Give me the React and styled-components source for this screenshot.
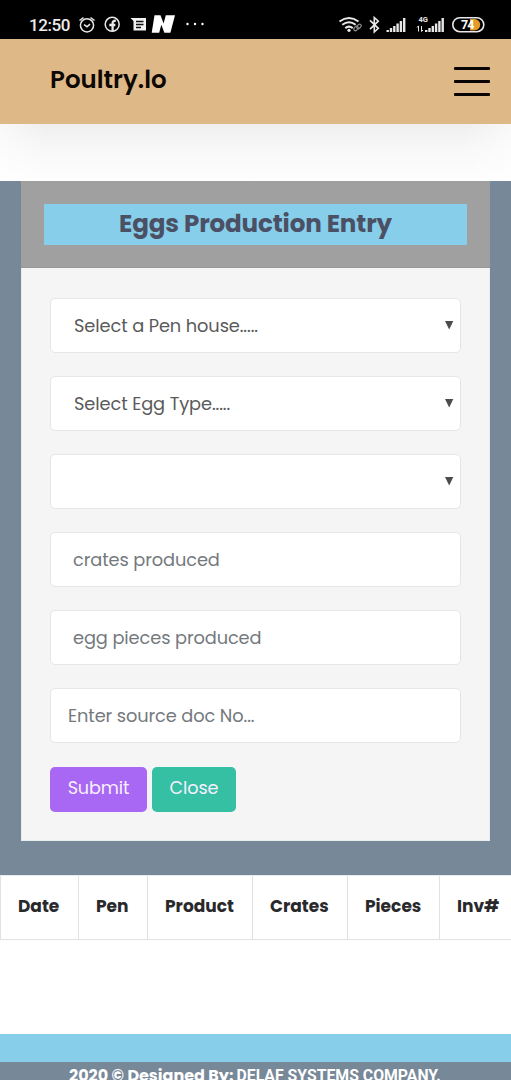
import React from 'react';
import styled, { createGlobalStyle } from 'styled-components';

const GlobalStyle = createGlobalStyle`
  *, *::before, *::after { box-sizing: border-box; }
  body { margin: 0; background: #fff; font-family: Poppins, Inter, "Open Sans", sans-serif; }
`;

const Page = styled.div`
  display: flex;
  flex-direction: column;
  width: 511px;
  height: 1080px;
  overflow: hidden;
  background: #fff;
`;

const Label = styled.span`
  letter-spacing: ${(p) => p.$track || 0}px;
  white-space: pre;
`;

const StatusBar = styled.div`
  display: flex;
  flex: none;
  justify-content: space-between;
  height: 39px;
  padding: 9px 26px 0 29px;
  background: #000;
  color: #ececec;
`;

const StatusGroup = styled.div`
  display: flex;
  height: 31px;
`;

const Clock = styled.span`
  width: 48px;
  font: 500 17px/32px Roboto, sans-serif;
  letter-spacing: -0.4px;
`;

const TopBar = styled.header`
  display: flex;
  flex: none;
  justify-content: space-between;
  height: 85px;
  padding: 0 21px 0 50px;
  background: #deb887;
`;

const Brand = styled.div`
  padding-top: 22px;
  color: #0d0804;
  font-size: 24.5px;
  font-weight: 600;
  line-height: 37px;
`;

const MenuButton = styled.button`
  display: flex;
  flex-direction: column;
  gap: 10px;
  width: 36px;
  margin-top: 28px;
  padding: 0;
  border: 0;
  background: none;
`;

const MenuLine = styled.span`
  height: 3px;
  border-radius: 1px;
  background: #080402;
`;

const Shade = styled.div`
  flex: none;
  height: 57px;
  background:
    linear-gradient(90deg, rgba(255, 255, 255, 0.6), rgba(255, 255, 255, 0) 9%, rgba(255, 255, 255, 0) 91%, rgba(255, 255, 255, 0.6)),
    linear-gradient(180deg, #efefef, #f8f8f8 45%, #fefefe);
`;

const Main = styled.main`
  flex: none;
  height: 694px;
  padding: 0 21px;
  background: #778899;
`;

const Card = styled.section`
  height: 660px;
  border: 1px solid #e9edf0;
  border-top: 0;
  background: #f5f5f5;
`;

const CardHeader = styled.div`
  height: 87px;
  margin: 0 -1px;
  padding: 23px 23px 0;
  background: #a0a0a0;
  border-bottom: 1px solid #969696;
`;

const Title = styled.h1`
  height: 41px;
  margin: 0;
  background: #87ceeb;
  color: #4b5064;
  font-size: 24.6px;
  font-weight: 700;
  line-height: 39px;
  text-align: center;
`;

const Form = styled.div`
  display: flex;
  flex-direction: column;
  gap: 23.2px;
  padding: 29.5px 28px 0;
`;

const Field = styled.div`
  display: flex;
  align-items: center;
  justify-content: space-between;
  height: 55px;
  padding: 0 6px 0 ${(p) => p.$inset}px;
  border: 1px solid #e6e6e6;
  border-radius: 5px;
  background: #fff;
  color: ${(p) => (p.$placeholder ? '#74797e' : '#5a5a5a')};
  font-size: 17.8px;
`;

const Actions = styled.div`
  display: flex;
  gap: 5px;
`;

const Button = styled.button`
  width: ${(p) => p.$width}px;
  height: 45px;
  padding: 0 0 2px;
  border: 0;
  border-radius: 5px;
  background: ${(p) => p.$color};
  color: #f8f0ff;
  font: 400 17.6px Poppins, Inter, sans-serif;
`;

const Table = styled.div`
  display: grid;
  flex: none;
  grid-template-columns: 78px 69px 105px 95px 92px 72px;
  height: 65px;
  border-bottom: 1px solid #e2e2e2;
  border-top: 1px solid #e8ebee;
`;

const HeadCell = styled.div`
  padding-left: 17px;
  border-left: 1px solid #e2e2e2;
  color: #29292c;
  font-size: 17px;
  font-weight: 700;
  line-height: 61px;
`;

const SkyBand = styled.div`
  flex: none;
  height: 28px;
  margin-top: 94px;
  background: #87ceeb;
`;

const Footer = styled.footer`
  display: flex;
  flex: none;
  height: 18px;
  padding: 1px 0 0 69px;
  overflow: hidden;
  background: #778899;
  color: #fff;
  font-size: 16px;
  font-weight: 700;
  line-height: 25px;
`;

const Company = styled.span`
  margin-left: 3px;
  font-family: Roboto, sans-serif;
  font-size: 15.8px;
  font-weight: 700;
  white-space: nowrap;
`;

const LeftIcons = () => (
  <svg width="130" height="30" viewBox="77 9 130 30" fill="none" stroke="#e8e8e8">
    <g strokeWidth="1.5">
      <circle cx="87" cy="25.3" r="6.6" />
      <path d="M79.5 20.5l4-3M94.5 20.5l-4-3M84 24.7l3 2 3-2.6" />
      <circle cx="112.2" cy="24.3" r="7" />
    </g>
    <path d="M112.6 31.5v-8.2c0-1.9.8-2.7 3.2-2.5M109.3 25h6" strokeWidth="2.3" />
    <path d="M130.5 18H146v12.5h-12.5V21z" fill="#f2f2f2" stroke="none" />
    <path d="M136 21.5h7.5M136 24.5h7.5M136 27.5h5" stroke="#111" strokeWidth="1.3" />
    <path d="M154.5 15.3h6l3.1 8.2 2.2-8.2H175l-4.6 17.5h-6l-3.1-8-2.1 8h-7.5z" fill="#fff" stroke="none" />
    <g fill="#fff" stroke="none">
      <circle cx="187.5" cy="24" r="1.2" />
      <circle cx="195" cy="24" r="1.2" />
      <circle cx="202.5" cy="24" r="1.2" />
    </g>
  </svg>
);

const bars = [2, 4, 6, 8.5, 11, 14];

const RightIcons = () => (
  <svg width="147" height="30" viewBox="338 9 147 30" fill="none" stroke="#e8e8e8">
    <g strokeWidth="2">
      <path d="M339.5 21.5q9.5-7 19 0M342.3 24.8q6.7-5.2 13.4 0M345.3 28.1q3.7-3 7.4 0" />
    </g>
    <circle cx="349" cy="30.3" r="1.6" fill="#eee" stroke="none" />
    <g stroke="#888" strokeWidth="1.3">
      <rect x="353.5" y="26.8" width="5" height="3.2" rx="1.6" transform="rotate(-45 356 28.4)" />
      <rect x="356.5" y="24.8" width="5" height="3.2" rx="1.6" transform="rotate(-45 359 26.4)" />
    </g>
    <path d="M370 20.3l8.3 8-4 3.7V17.5l4 3.7-8.3 8" strokeWidth="1.6" />
    <g fill="#e8e8e8" stroke="none">
      {bars.map((h, i) => (
        <rect key={i} x={386.5 + i * 3.3} y={32 - h} width="2.4" height={h} />
      ))}
      {bars.map((h, i) => (
        <rect key={i} x={425 + i * 3.3} y={32 - h} width="2.4" height={h} />
      ))}
      <text x="418.5" y="21.5" fontFamily="Roboto, sans-serif" fontSize="7.5" fontWeight="700">4G</text>
    </g>
    <path d="M418.5 26v5.5M417 27.5l1.5-1.7M421.5 26v5.5M421.5 31.5l1.5-1.5" strokeWidth="1" />
    <path d="M470 19h4.5a5.7 5.7 0 0 1 0 11.4H470z" fill="#e49a2a" stroke="none" />
    <rect x="452.8" y="17.7" width="31" height="14" rx="7" strokeWidth="1.6" />
    <text x="461" y="29.2" fill="#fff" stroke="none" fontFamily="Roboto, sans-serif" fontSize="12.5" fontWeight="700" letterSpacing="-.8">74</text>
  </svg>
);

const Arrow = () => (
  <svg width="10" height="9" viewBox="0 0 10 9">
    <path d="M1 0h8.3L5.2 8.5z" fill="#4c4c4c" />
  </svg>
);

const fields = [
  { text: 'Select a Pen house.....', inset: 23, select: true, track: -0.1 },
  { text: 'Select Egg Type.....', inset: 23, select: true, track: -0.1 },
  { text: '', inset: 23, select: true },
  { text: 'crates produced', inset: 22, track: -0.1 },
  { text: 'egg pieces produced', inset: 22, track: -0.1 },
  { text: 'Enter source doc No...', inset: 17, track: -0.1 },
];

const columns = ['Date', 'Pen', 'Product', 'Crates', 'Pieces', 'Inv#'];

export default function App() {
  return (
    <Page>
      <GlobalStyle />
      <StatusBar>
        <StatusGroup>
          <Clock>12:50</Clock>
          <LeftIcons />
        </StatusGroup>
        <RightIcons />
      </StatusBar>
      <TopBar>
        <Brand><Label>Poultry.lo</Label></Brand>
        <MenuButton aria-label="Menu">
          <MenuLine />
          <MenuLine />
          <MenuLine />
        </MenuButton>
      </TopBar>
      <Shade />
      <Main>
        <Card>
          <CardHeader>
            <Title><Label $track={-0.15}>Eggs Production Entry</Label></Title>
          </CardHeader>
          <Form>
            {fields.map((f, i) => (
              <Field key={i} $inset={f.inset} $placeholder={!f.select}>
                <Label $track={f.track}>{f.text}</Label>
                {f.select && <Arrow />}
              </Field>
            ))}
            <Actions>
              <Button $width={97} $color="#a868f3"><Label $track={-0.1}>Submit</Label></Button>
              <Button $width={84} $color="#35bfa3"><Label $track={-0.1}>Close</Label></Button>
            </Actions>
          </Form>
        </Card>
      </Main>
      <Table>
        {columns.map((c) => (
          <HeadCell key={c}><Label>{c}</Label></HeadCell>
        ))}
      </Table>
      <SkyBand />
      <Footer>
        <Label>2020 © Designed By:</Label>
        <Company><Label>DELAF SYSTEMS COMPANY.</Label></Company>
      </Footer>
    </Page>
  );
}
